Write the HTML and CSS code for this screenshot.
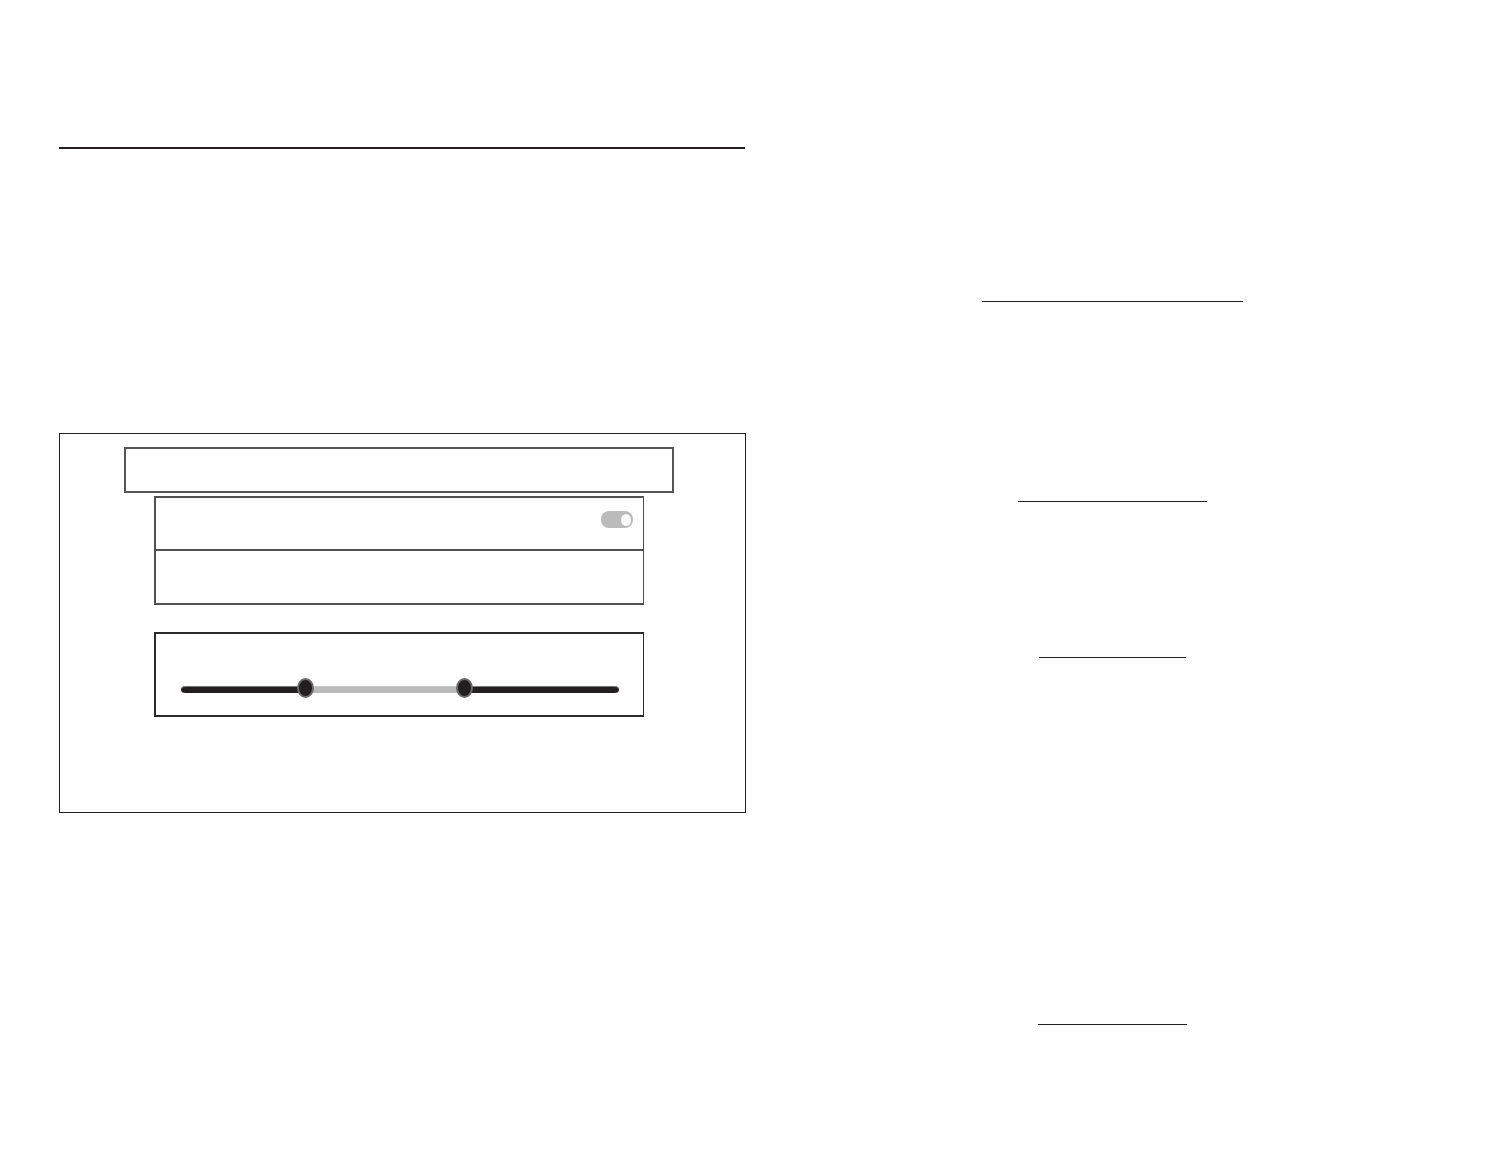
FILE: index.html
```html
<!DOCTYPE html>
<html lang="en">
<head>
<meta charset="utf-8">
<title>Settings guide</title>
<link rel="stylesheet" href="styles.css">
</head>
<body>
<main class="spread">
  <section class="page page-left">
    <hr class="page-rule">
    <div class="figure">
      <div class="title-box"></div>
      <div class="panels">
        <div class="options">
          <div class="option">
            <input class="toggle" type="checkbox" role="switch" aria-label="Enable" checked>
          </div>
          <div class="option"></div>
        </div>
        <div class="range-box">
          <div class="range">
            <div class="track"></div>
            <input class="slider" type="range" min="0" max="1000" value="275" aria-label="Minimum">
            <input class="slider" type="range" min="0" max="1000" value="653" aria-label="Maximum">
          </div>
        </div>
      </div>
    </div>
  </section>
  <section class="page page-right">
    <hr class="divider divider-wide">
    <hr class="divider divider-medium">
    <hr class="divider divider-narrow">
    <hr class="divider divider-last">
  </section>
</main>
</body>
</html>
```
FILE: styles.css
```css
* {
  box-sizing: border-box;
}

body {
  margin: 0;
  background: #fefefe;
  font-family: "Liberation Sans", Arial, sans-serif;
}

.spread {
  display: grid;
  grid-template-columns: 1fr 1fr;
  gap: 23px;
  min-height: 100vh;
  padding: 0 56px 0 59px;
}

.page {
  display: flex;
  flex-direction: column;
}

.page-left {
  padding-top: 147px;
}

.page-rule {
  height: 2px;
  margin: 0 1px 284px 0;
  border: 0;
  background: #231f20;
}

.figure {
  padding: 13px 71px 95px 64px;
  border: 1px solid #231f20;
}

.title-box {
  height: 46px;
  border: 2px solid #555;
}

.panels {
  display: flex;
  flex-direction: column;
  gap: 27px;
  padding: 3px 30px 0;
}

.options {
  border: 2px solid #505050;
  border-right-width: 1px;
}

.option {
  display: flex;
  justify-content: flex-end;
  height: 51px;
  padding: 13px 10px 0;
}

.option + .option {
  height: 54px;
  border-top: 2px solid #505050;
}

.toggle {
  display: flex;
  align-items: center;
  justify-content: flex-end;
  width: 32px;
  height: 17px;
  margin: 0;
  padding-right: 2px;
  border-radius: 8px;
  background: #bbb;
  appearance: none;
}

.toggle::before {
  content: "";
  width: 10px;
  height: 12px;
  border-radius: 50%;
  background: #fafafa;
}

.range-box {
  padding: 44px 24px 17px 25px;
  border: 2px solid #2a282a;
  border-right-width: 1px;
}

.range {
  display: grid;
}

.track,
.slider {
  grid-area: 1 / 1;
}

.track {
  height: 7px;
  margin-top: 8px;
  border-radius: 5px / 4px;
  background: linear-gradient(to right, #221f20 28%, #bbb 28% 65%, #221f20 65%);
  box-shadow: inset 0 1px rgba(200, 205, 200, 0.5);
}

.slider {
  width: 100%;
  height: 20px;
  margin: 0;
  background: transparent;
  appearance: none;
  pointer-events: none;
}

.slider::-webkit-slider-thumb {
  width: 17px;
  height: 20px;
  border: 2px solid #6b6b6b;
  border-radius: 50%;
  background: #221f20;
  appearance: none;
  pointer-events: auto;
}

.page-right {
  align-items: center;
  padding-top: 301px;
}

.divider {
  height: 1px;
  margin: 0;
  border: 0;
  background: #231f20;
}

.divider-wide {
  width: 261px;
  margin-bottom: 199px;
}

.divider-medium {
  width: 189px;
  margin-bottom: 155px;
}

.divider-narrow {
  width: 147px;
  margin-bottom: 366px;
}

.divider-last {
  width: 149px;
}
```
